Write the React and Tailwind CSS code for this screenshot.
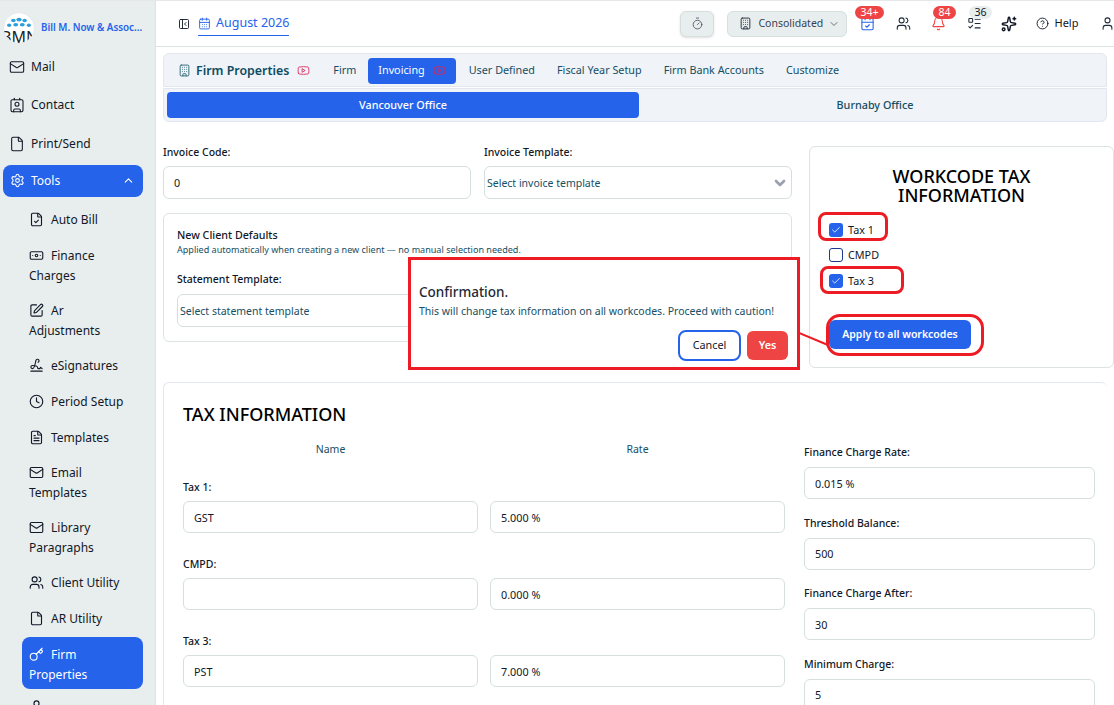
import React from 'react';
import {
  Mail, Contact, File, Settings, ChevronUp, ChevronDown, FileCheck, Banknote, SquarePen, Signature, Clock, FileText,
  Users, Key, PanelLeftClose, CalendarDays, Timer, Building, CalendarCheck, Bell, ListTodo, Sparkles, CircleHelp,
  User, Youtube, Check,
} from 'lucide-react';

const topItems = [
  { label: 'Mail', icon: Mail },
  { label: 'Contact', icon: Contact },
  { label: 'Print/Send', icon: File },
];

const toolItems = [
  { label: 'Auto Bill', icon: FileCheck },
  { label: 'Finance Charges', icon: Banknote, tight: true },
  { label: 'Ar Adjustments', icon: SquarePen, tight: true },
  { label: 'eSignatures', icon: Signature },
  { label: 'Period Setup', icon: Clock },
  { label: 'Templates', icon: FileText, tight: true },
  { label: 'Email Templates', icon: Mail, tight: true },
  { label: 'Library Paragraphs', icon: Mail, tight: true },
  { label: 'Client Utility', icon: Users },
  { label: 'AR Utility', icon: File },
];

const Logo = () => (
  <div className="relative w-8 h-8 rounded-full bg-white overflow-hidden shrink-0 border border-gray-200">
    <svg viewBox="0 0 32 32" className="absolute inset-0 w-full h-full">
      <g fill="#2a9fdb">
        <ellipse cx="16" cy="7" rx="2.8" ry="2" />
        <ellipse cx="10" cy="8" rx="2.4" ry="1.8" />
        <ellipse cx="22" cy="8" rx="2.4" ry="1.8" />
        <ellipse cx="5.5" cy="13" rx="2.2" ry="1.8" />
        <ellipse cx="26.5" cy="13" rx="2.2" ry="1.8" />
        <ellipse cx="12.5" cy="12.5" rx="2.6" ry="1.8" />
        <ellipse cx="19.5" cy="12.5" rx="2.6" ry="1.8" />
      </g>
    </svg>
    <span className="absolute left-[-3px] top-[15px] text-[16px] leading-[18px] text-[#222] whitespace-nowrap">BMN</span>
  </div>
);

const SideItem = ({ label, icon: Icon, active, tight }) => (
  <div
    className={`rounded-lg leading-5 text-[12px] px-[7px] ${
      active ? 'bg-[#2563eb] text-white pt-2 pb-1' : `text-[#111827] pt-2 ${tight ? 'pb-[7px]' : 'pb-2'}`
    }`}
  >
    <Icon size={15} strokeWidth={1.8} className="inline-block mr-[7px] align-[-3px]" />
    {label}
  </div>
);

const Field = ({ value, className = '' }) => (
  <input
    readOnly
    value={value}
    className={`block w-full h-8 rounded-md border border-[#d5dfdf] bg-white px-[10px] text-[10.8px] text-[#111827] outline-none ${className}`}
  />
);

const Label = ({ children, className = '' }) => (
  <div className={`text-[10.5px] leading-[14px] font-medium text-[#111827] ${className}`}>{children}</div>
);

const SelectBox = ({ text }) => (
  <div className="flex items-center justify-between h-[33px] rounded-md border border-[#d5dfdf] bg-white pl-[2px] pr-[3px] text-[10.5px] text-[#164e63]">
    <span className="pt-[2px]">{text}</span>
    <ChevronDown size={16} strokeWidth={4} className="text-gray-400" />
  </div>
);

const Tick = ({ on, label }) => (
  <div className="flex items-center h-[25.5px] text-[10.8px] text-[#111827]">
    <span className={`flex items-center justify-center w-[14px] h-[14px] rounded-[3px] mr-[5px] ${on ? 'bg-[#2563eb]' : 'bg-white border border-blue-900'}`}>
      {on && <Check size={10} strokeWidth={2} className="text-white" />}
    </span>
    {label}
  </div>
);

const TopIcon = ({ icon: Icon, size = 15, stroke = 1.7, badge, badgeClass, className, left }) => (
  <div className={`relative flex justify-center w-[16px] shrink-0 ${left}`}>
    <Icon size={size} strokeWidth={stroke} className={className} />
    {badge && (
      <span className={`absolute top-[-10px] h-[13px] px-[5px] rounded-full text-[10.5px] leading-[13px] whitespace-nowrap ${badgeClass}`}>{badge}</span>
    )}
  </div>
);

const Sidebar = () => (
  <aside className="w-[156px] shrink-0 bg-[#e8eeee] border-r border-[#dde3e3] h-full overflow-hidden pl-[3px] pr-[12px]">
    <div className="flex items-center gap-[6px] h-[44px] mt-[12px] -translate-y-[7px]">
      <Logo />
      <span className="text-[9.8px] font-semibold text-[#2563eb] whitespace-nowrap">Bill M. Now &amp; Assoc...</span>
    </div>
    <div className="-mt-[9.5px] text-[12px]">
      {topItems.map((item) => (
        <div key={item.label} className="flex items-center h-[38.5px] pl-[6px] text-[#111827]">
          <item.icon size={16} strokeWidth={1.6} className="mr-[6px]" />
          {item.label}
        </div>
      ))}
    </div>
    <div className="flex items-center justify-between h-8 mt-[1.5px] rounded-lg bg-[#2563eb] text-white px-[7px] text-[12px]">
      <span className="flex items-center">
        <Settings size={15} strokeWidth={1.7} className="mr-[6px]" />
        Tools
      </span>
      <ChevronUp size={13} className="mr-[1px]" />
    </div>
    <div className="pl-[19px] mt-[5px]">
      {toolItems.map((item) => (
        <SideItem key={item.label} {...item} />
      ))}
      <SideItem label="Firm Properties" icon={Key} active />
      <SideItem label="" icon={User} />
    </div>
  </aside>
);

const Header = () => (
  <header className="flex items-center h-[46px] border-b border-[#dde3e3] shrink-0 whitespace-nowrap overflow-hidden">
    <PanelLeftClose size={12} strokeWidth={1.8} className="ml-[22px] shrink-0 text-[#111827]" />
    <div className="flex items-center shrink-0 ml-[8px] h-[24px] border-b border-[#2563eb] text-[#2563eb] text-[12.5px]">
      <CalendarDays size={13} strokeWidth={1.7} className="mr-[5px]" />
      August 2026
    </div>
    <div className="flex items-center justify-center shrink-0 ml-[391px] w-[34px] h-[26px] rounded-md border border-[#d5dfdf] bg-[#e8eeee] shadow-sm">
      <Timer size={13} strokeWidth={1.6} className="text-gray-600" />
    </div>
    <div className="flex items-center shrink-0 ml-[13px] w-[120px] h-[26px] pl-[11px] rounded-md border border-[#d5dfdf] bg-[#e8eeee] text-[10.5px] text-gray-700">
      <Building size={13} strokeWidth={1.7} className="mr-[6px] text-gray-800" />
      Consolidated
      <ChevronDown size={12} className="ml-[5px] text-gray-500" />
    </div>
    <TopIcon icon={CalendarCheck} badge="34+" badgeClass="left-[-4px] bg-[#ef4444] text-white" className="text-[#2563eb]" left="ml-[12px]" />
    <TopIcon icon={Users} className="text-gray-800" left="ml-[20px]" />
    <TopIcon icon={Bell} badge="84" badgeClass="left-[3px] bg-[#ef4444] text-white" className="text-[#ef4444]" left="ml-[19px]" />
    <TopIcon icon={ListTodo} badge="36" badgeClass="left-[3px] bg-[#e8eeee] text-[#111827]" className="text-gray-800" left="ml-[20px]" />
    <TopIcon icon={Sparkles} size={16} stroke={2.2} className="text-[#111827]" left="ml-[19px]" />
    <CircleHelp size={13} strokeWidth={1.7} className="ml-[19px] shrink-0 text-[#111827]" />
    <span className="ml-[5px] text-[11px] text-[#111827]">Help</span>
    <User size={15} strokeWidth={1.7} className="ml-[22px] shrink-0 text-gray-800" />
  </header>
);

const TabBar = () => (
  <div className="flex items-center h-[34px] pt-px rounded-t-md border border-[#e2e6ee] bg-[#f0f3f8] text-[10.8px] text-[#164e63] whitespace-nowrap">
    <Building size={13} strokeWidth={1.7} className="ml-[14px] text-[#2b6777]" />
    <span className="ml-[5px] text-[12.4px] font-semibold text-[#0e4c5f] pt-px">Firm Properties</span>
    <Youtube size={13} strokeWidth={1.6} className="ml-[8px] text-[#d6295a]" />
    <span className="ml-[23px]">Firm</span>
    <span className="flex items-center ml-[12px] h-[26px] px-[10px] rounded-[4px] bg-[#2563eb] text-white">
      Invoicing
      <Youtube size={13} strokeWidth={1.6} className="ml-[8px] text-[#d6295a]" />
    </span>
    <span className="ml-[13px]">User Defined</span>
    <span className="ml-[22px]">Fiscal Year Setup</span>
    <span className="ml-[22px]">Firm Bank Accounts</span>
    <span className="ml-[22px]">Customize</span>
  </div>
);

const OfficeTabs = () => (
  <div className="flex h-[34px] mt-px p-[3px] rounded-b-md border border-[#e2e6ee] bg-[#f0f3f8] text-[10.8px] font-medium overflow-hidden">
    <div className="flex items-center justify-center w-[472px] shrink-0 rounded-[4px] bg-[#2563eb] text-white">Vancouver Office</div>
    <div className="flex items-center justify-center w-[472px] shrink-0 text-[#164e63]">Burnaby Office</div>
  </div>
);

const InvoiceForm = () => (
  <div className="w-[629px] shrink-0">
    <div className="grid grid-cols-2 gap-x-[13px]">
      <div>
        <Label className="-mt-px mb-[7px]">Invoice Code:</Label>
        <Field value="0" className="h-[33px]" />
      </div>
      <div>
        <Label className="-mt-px mb-[7px]">Invoice Template:</Label>
        <SelectBox text="Select invoice template" />
      </div>
    </div>
    <div className="h-[129px] mt-[14px] rounded-md border border-[#dde3e3] px-[13px] pt-[14px]">
      <div className="text-[10.7px] leading-[14px] font-medium text-[#111827]">New Client Defaults</div>
      <div className="text-[9.05px] leading-[15px] text-[#164e63]">Applied automatically when creating a new client — no manual selection needed.</div>
      <Label className="mt-[15px] mb-[8px]">Statement Template:</Label>
      <SelectBox text="Select statement template" />
    </div>
  </div>
);

const WorkcodeCard = () => (
  <div className="w-[305px] h-[222px] shrink-0 ml-[17px] rounded-md border border-[#dde3e3] pt-[20px] pl-[19px]">
    <h2 className="pr-[19px] text-center text-[18px] leading-[19px] font-medium text-black">WORKCODE TAX<br />INFORMATION</h2>
    <div className="mt-[12px]">
      <Tick on label="Tax 1" />
      <Tick label="CMPD" />
      <Tick on label="Tax 3" />
    </div>
    <button className="block mt-[26px] pt-px w-[142px] h-[29px] rounded-md bg-[#2563eb] text-white text-[10.5px] font-semibold">Apply to all workcodes</button>
  </div>
);

const taxRows = [
  { label: 'Tax 1:', name: 'GST', rate: '5.000 %' },
  { label: 'CMPD:', name: '', rate: '0.000 %' },
  { label: 'Tax 3:', name: 'PST', rate: '7.000 %' },
];

const chargeRows = [
  { label: 'Finance Charge Rate:', value: '0.015 %' },
  { label: 'Threshold Balance:', value: '500' },
  { label: 'Finance Charge After:', value: '30' },
  { label: 'Minimum Charge:', value: '5' },
];

const TaxCard = () => (
  <div className="mt-[14px] rounded-t-md border border-[#e2e6ee] border-r-0 pl-[19px] pt-[20px] h-[340px]">
    <h2 className="text-[18px] leading-[22px] font-medium text-black">TAX INFORMATION</h2>
    <div className="flex mt-[19px]">
      <div className="w-[602px] shrink-0">
        <div className="grid grid-cols-2 gap-x-3 text-center text-[10.5px] leading-[14px] text-[#164e63] -mt-[2px]">
          <span>Name</span>
          <span>Rate</span>
        </div>
        {taxRows.map((row) => (
          <div key={row.label} className="mt-[24px]">
            <Label>{row.label}</Label>
            <div className="grid grid-cols-2 gap-x-3 mt-[7px]">
              <Field value={row.name} />
              <Field value={row.rate} />
            </div>
          </div>
        ))}
      </div>
      <div className="w-[291px] ml-[19px] shrink-0 mt-px">
        {chargeRows.map((row) => (
          <div key={row.label} className="mb-[16.5px]">
            <Label>{row.label}</Label>
            <Field value={row.value} className="mt-[8px]" />
          </div>
        ))}
      </div>
    </div>
  </div>
);

const ConfirmDialog = () => (
  <div className="absolute left-[408px] top-[256px] w-[392px] h-[113px] border-[3px] border-[#ed1c24] bg-white pl-[8px] pr-[9px] pt-[23px]">
    <div className="text-[13.5px] leading-[18px] font-medium text-[#1f2937]">Confirmation.</div>
    <div className="mt-[2px] text-[10.5px] leading-[16px] text-[#164e63] whitespace-nowrap">This will change tax information on all workcodes. Proceed with caution!</div>
    <div className="flex justify-end items-center gap-[6px] mt-[11px]">
      <button className="w-[63px] h-[31px] rounded-lg border-2 border-[#2563eb] bg-white text-[10.8px] text-[#111827]">Cancel</button>
      <button className="w-[41px] h-[29px] rounded-md bg-[#ef4444] text-white text-[10.8px] font-semibold">Yes</button>
    </div>
  </div>
);

// the red review marks drawn on top of the screenshot
const Annotations = () => (
  <>
    <div className="absolute left-[818px] top-[211px] w-[70px] h-[29px] rounded-lg border-[3px] border-[#ed1c24]" />
    <div className="absolute left-[820px] top-[265px] w-[84px] h-[28px] rounded-lg border-[3px] border-[#ed1c24]" />
    <div className="absolute left-[826px] top-[313px] w-[158px] h-[42px] rounded-[14px] border-[3px] border-[#ed1c24]" />
    <svg className="absolute left-[799px] top-[329px] w-[30px] h-[18px]" viewBox="0 0 30 18">
      <line x1="0" y1="3" x2="29" y2="15" stroke="#ed1c24" strokeWidth="2" />
    </svg>
  </>
);

const App = () => (
  <div className="relative flex h-[705px] w-[1114px] overflow-hidden border-t border-[#e5e7eb] bg-white font-['Noto_Sans',sans-serif]">
    <Sidebar />
    <main className="flex flex-col flex-1 min-w-0 overflow-hidden">
      <Header />
      <div className="px-[7px] pt-[6px]">
        <TabBar />
        <OfficeTabs />
        <div className="flex mt-[24px]">
          <InvoiceForm />
          <WorkcodeCard />
        </div>
        <TaxCard />
      </div>
    </main>
    <ConfirmDialog />
    <Annotations />
  </div>
);

export default App;
